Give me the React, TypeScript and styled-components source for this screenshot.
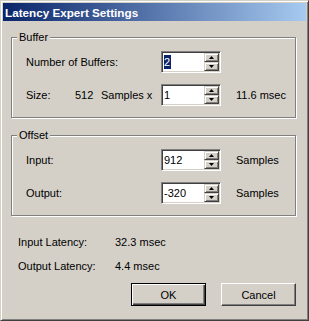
import React from "react";
import styled, { createGlobalStyle } from "styled-components";

const Global = createGlobalStyle`
  html, body { margin: 0; padding: 0; background: #d4d0c8; }
  * { box-sizing: border-box; }
`;

const Window = styled.div`
  width: 309px;
  height: 321px;
  background: #d4d0c8;
  border-top: 1px solid #d4d0c8;
  border-left: 1px solid #d4d0c8;
  border-right: 1px solid #404040;
  border-bottom: 1px solid #404040;
  box-shadow: inset 1px 1px #fff, inset -1px -1px #808080;
  padding: 2px;
  display: flex;
  flex-direction: column;
  font-family: "Liberation Sans", Arial, sans-serif;
  font-size: 11px;
  color: #000;
`;

const TitleBar = styled.div`
  height: 18px;
  flex: none;
  display: flex;
  align-items: center;
  padding-left: 2px;
  background: linear-gradient(to right, #0a246a, #a6caf0);
  color: #fff;
  font-weight: bold;
  font-size: 11.7px;
`;

const Body = styled.div`
  display: flex;
  flex-direction: column;
  padding: 16px 10px 0 8px;
`;

const Group = styled.div<{ $mt?: number }>`
  position: relative;
  border: 1px solid #808080;
  box-shadow: inset 1px 1px #fff, 1px 1px #fff;
  padding: 13px 0 11px 14px;
  margin-top: ${(p) => p.$mt ?? 0}px;
  display: flex;
  flex-direction: column;
  gap: 11px;
`;

const Legend = styled.span`
  position: absolute;
  top: -7px;
  left: 5px;
  padding: 0 2px;
  line-height: 13px;
  background: #d4d0c8;
`;

const Row = styled.div`
  display: flex;
  align-items: center;
  height: 22px;
`;

const Cell = styled.span<{ $w: number }>`
  width: ${(p) => p.$w}px;
  flex: none;
  white-space: nowrap;
`;

const Unit = styled.span`
  margin-left: 15px;
  white-space: nowrap;
`;

const SpinBox = styled.div`
  width: 60px;
  height: 22px;
  flex: none;
  display: flex;
  background: #fff;
  border-top: 1px solid #808080;
  border-left: 1px solid #808080;
  border-right: 1px solid #fff;
  border-bottom: 1px solid #fff;
  box-shadow: inset 1px 1px #404040, inset -1px -1px #d4d0c8;
  padding: 1px;
`;

const SpinText = styled.div`
  flex: 1;
  display: flex;
  align-items: center;
  padding-left: 1px;
`;

const Selected = styled.span`
  background: #0a246a;
  color: #fff;
  line-height: 14px;
  padding: 0 1px 0 0;
`;

const SpinButtons = styled.div`
  width: 15px;
  display: flex;
  flex-direction: column;
`;

const SpinButton = styled.div`
  height: 9px;
  background: #d4d0c8;
  border-top: 1px solid #d4d0c8;
  border-left: 1px solid #d4d0c8;
  border-right: 1px solid #404040;
  border-bottom: 1px solid #404040;
  box-shadow: inset 1px 1px #fff, inset -1px -1px #808080;
  display: flex;
  align-items: center;
  justify-content: center;
`;

const Arrow = ({ down }: { down?: boolean }) => (
  <svg width="5" height="3" viewBox="0 0 5 3" style={{ display: "block" }}>
    {down ? (
      <polygon points="0,0 5,0 2.5,3" fill="#000" />
    ) : (
      <polygon points="0,3 5,3 2.5,0" fill="#000" />
    )}
  </svg>
);

const Spinner = ({ value, selected }: { value: string; selected?: boolean }) => (
  <SpinBox>
    <SpinText>{selected ? <Selected>{value}</Selected> : value}</SpinText>
    <SpinButtons>
      <SpinButton>
        <Arrow />
      </SpinButton>
      <SpinButton>
        <Arrow down />
      </SpinButton>
    </SpinButtons>
  </SpinBox>
);

const Info = styled.div`
  margin-top: 14px;
  padding-left: 7px;
  display: flex;
  flex-direction: column;
`;

const InfoRow = styled.div`
  height: 24px;
  display: flex;
  align-items: center;
`;

const Buttons = styled.div`
  margin-top: 5px;
  display: flex;
  justify-content: flex-end;
  gap: 15px;
`;

const Button = styled.div<{ $default?: boolean }>`
  width: 75px;
  height: 23px;
  display: flex;
  align-items: center;
  justify-content: center;
  background: #d4d0c8;
  ${(p) =>
    p.$default
      ? `border: 1px solid #000;
         box-shadow: inset 1px 1px #fff, inset -1px -1px #404040, inset -2px -2px #808080;`
      : `border-top: 1px solid #fff;
         border-left: 1px solid #fff;
         border-right: 1px solid #404040;
         border-bottom: 1px solid #404040;
         box-shadow: inset -1px -1px #808080;`}
`;

export default function App() {
  return (
    <>
      <Global />
      <Window>
        <TitleBar>Latency Expert Settings</TitleBar>
        <Body>
          <Group>
            <Legend>Buffer</Legend>
            <Row>
              <Cell $w={135}>Number of Buffers:</Cell>
              <Spinner value="2" selected />
            </Row>
            <Row>
              <Cell $w={49}>Size:</Cell>
              <Cell $w={26}>512</Cell>
              <Cell $w={60}>Samples x</Cell>
              <Spinner value="1" />
              <Unit>11.6 msec</Unit>
            </Row>
          </Group>
          <Group $mt={17}>
            <Legend>Offset</Legend>
            <Row>
              <Cell $w={135}>Input:</Cell>
              <Spinner value="912" />
              <Unit>Samples</Unit>
            </Row>
            <Row>
              <Cell $w={135}>Output:</Cell>
              <Spinner value="-320" />
              <Unit>Samples</Unit>
            </Row>
          </Group>
          <Info>
            <InfoRow>
              <Cell $w={97}>Input Latency:</Cell>
              <span>32.3 msec</span>
            </InfoRow>
            <InfoRow>
              <Cell $w={97}>Output Latency:</Cell>
              <span>4.4 msec</span>
            </InfoRow>
          </Info>
          <Buttons>
            <Button $default>OK</Button>
            <Button>Cancel</Button>
          </Buttons>
        </Body>
      </Window>
    </>
  );
}
